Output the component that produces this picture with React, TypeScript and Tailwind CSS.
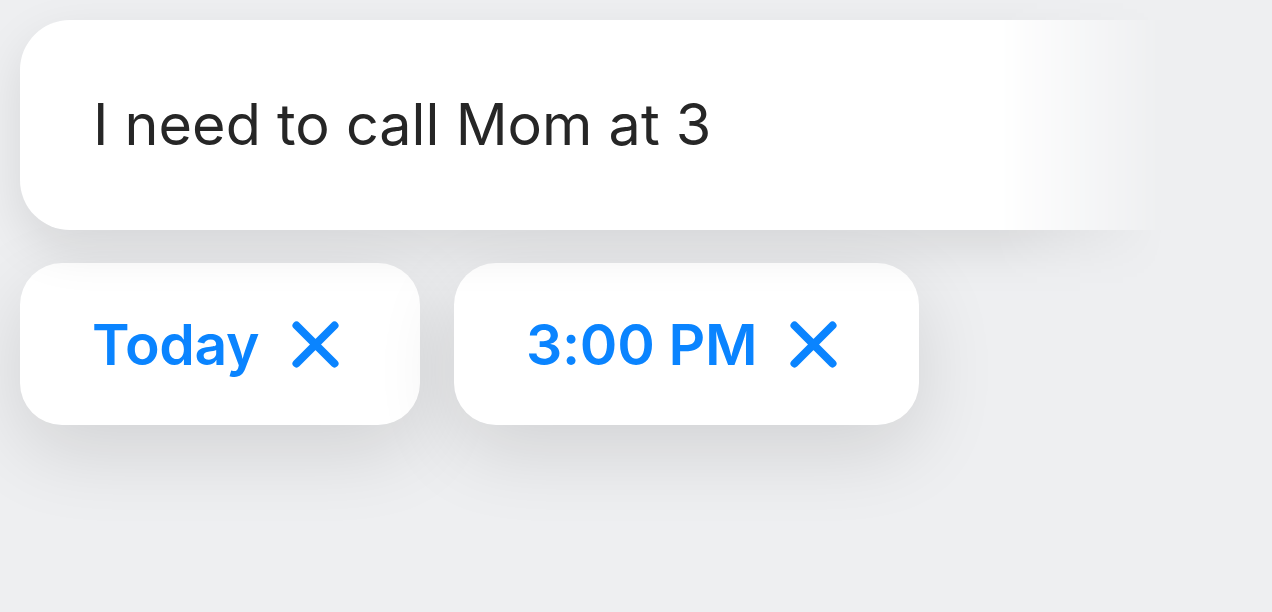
import React from "react";

function XIcon() {
  return (
    <svg width="47" height="47" viewBox="0 0 47 47" className="shrink-0">
      <path d="M4.5 4.5 L42.5 42.5 M42.5 4.5 L4.5 42.5" stroke="#0a84ff" strokeWidth="8" strokeLinecap="round" fill="none" />
    </svg>
  );
}

function Chip({ label, w }: { label: string; w: string }) {
  return (
    <div
      className={`${w} h-[162px] rounded-[42px] bg-white flex items-center pl-[72px] gap-[33px] shadow-[0_26px_80px_rgba(0,0,0,0.12)]`}
    >
      <span className="text-[57px] font-semibold text-[#0a84ff] leading-none tracking-[-0.3px]">{label}</span>
      <XIcon />
    </div>
  );
}

export default function App() {
  return (
    <div
      className="w-[1272px] h-[612px] bg-[#eeeff1] overflow-hidden flex flex-col"
      style={{ fontFamily: "Inter, 'Noto Sans', sans-serif" }}
    >
      <div className="pt-[20px] pl-[20px] pb-[80px] [mask-image:linear-gradient(to_right,black_995px,transparent_1165px)] [-webkit-mask-image:linear-gradient(to_right,black_995px,transparent_1165px)]">
        <div className="h-[210px] rounded-l-[50px] bg-white flex items-center pl-[73px] shadow-[0_18px_50px_rgba(0,0,0,0.1)]">
          <span className="text-[57.5px] text-[#262626] leading-none tracking-[0px]">I need to call Mom at 3</span>
        </div>
      </div>
      <div className="flex gap-[34px] pl-[20px] -mt-[47px]">
        <Chip label="Today" w="w-[400px]" />
        <Chip label="3:00 PM" w="w-[465px]" />
      </div>
    </div>
  );
}
